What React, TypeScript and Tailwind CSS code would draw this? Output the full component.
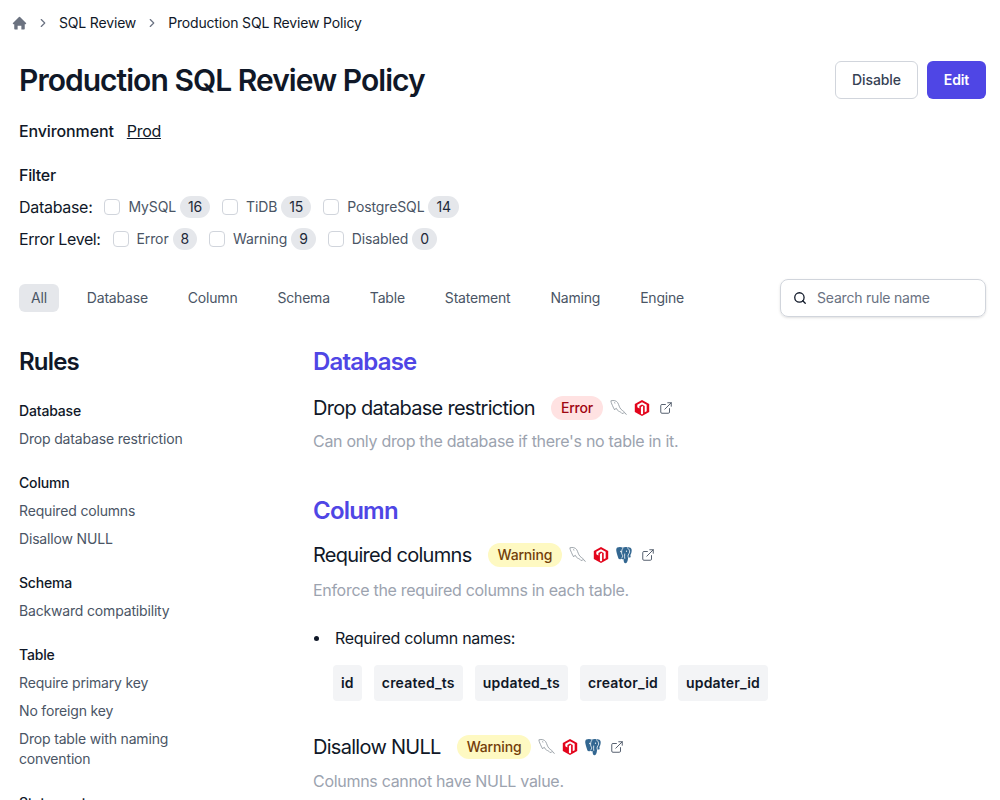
import { ExternalLink, ChevronRight, Search } from "lucide-react";

const HomeIcon = () => (
  <svg viewBox="0 0 20 20" className="w-[15px] h-[15px] shrink-0" fill="#6b7280">
    <path d="M10.700 1.300a1 1 0 0 0-1.400 0l-8 8A1 1 0 0 0 2 11h1v6a1 1 0 0 0 1 1h3.500v-5h5v5H16a1 1 0 0 0 1-1v-6h1a1 1 0 0 0 .700-1.700z" />
  </svg>
);

const MySqlIcon = () => (
  <svg viewBox="0 0 20 20" className="w-[18px] h-[18px] shrink-0" fill="none" stroke="#8a9299" strokeWidth="0.9" strokeLinejoin="round">
    <path d="M1 2c3-.8 6-.2 7.500 2 1.500 2.500 1.800 5.500 3.800 7.500 1.600 1.600 4 2.600 6 6" />
    <path d="M1 2c.2 2.500 1.500 4.500 2.500 7 .4 1 1 2 1.600 3 .4-.8 1-1.400 2-1.600.4 1.300 1.200 2.300 2.400 3 1.400.8 3 1.300 4 2.800.8-.6 1.500-.8 2.500-.6" />
    <path d="M4.500 4l1.400.6" />
  </svg>
);

const TidbIcon = () => (
  <svg viewBox="0 0 20 20" className="w-[18px] h-[18px] shrink-0">
    <path d="M10 1l8 4.500v9L10 19l-8-4.500v-9z" fill="#e3051c" />
    <path d="M4.800 6.500L10 3.500l5.200 3v7L13 14.800V7.800L10 6 7.100 7.700v2.900L4.800 9.300z" fill="#fff" />
    <path d="M8.800 8.800l2.400-1.300v9l-1.200.7-1.200-.7z" fill="#fff" />
  </svg>
);

const PostgresIcon = () => (
  <svg viewBox="0 0 20 20" className="w-[18px] h-[18px] shrink-0">
    <path d="M2.500 1.800c2.200-1 4.600-.7 6.100.1 1.500-.6 3.200-.9 5-.4 2.400-.6 4.300.3 4.800 2 .5 2-.3 4.600-1.200 6.300-.4 1 .7 2 0 2.700-.6.600-1.700.4-2.600.2-.2 2-.5 4-1.300 5.400-.8 1.300-2.600 1.200-3.300 0-.4-1.100-.4-2.400-.5-3.700-1.100.3-1.900.3-2.500-.2-1.100 1-2.400.8-3.200-.2C3.300 11.900 2 8.500 1.500 5.800 1.100 4.100 1.600 2.500 2.500 1.800z" fill="#336791" />
    <path d="M8.800 2.400c-1.300 1.500-1.600 3.600-1.400 5.800.1 1.200 1.300 1.800 1.100 3.200-.1.900-.8 1.600-1.300 2.200M13.600 1.900c1.600 1.100 2.800 2.800 2.700 4.900-.1 1.400-1.400 1.900-1.700 3.300-.2 1.100.1 2.200.2 2.900M10.800 8.400c0 2.200-.4 3.800.1 5.800" fill="none" stroke="#fff" strokeWidth="0.9" />
    <circle cx="6.500" cy="6.100" r="0.800" fill="#fff" />
    <circle cx="12.800" cy="5.800" r="0.700" fill="#fff" />
  </svg>
);

const Count = ({ children }: any) => (
  <span className="ml-1 h-[22px] min-w-[22px] px-[8px] rounded-full bg-gray-200 text-sm tracking-[-0.17px] text-gray-800 flex items-center justify-center">
    {children}
  </span>
);

const FilterItem = ({ label, count }: any) => (
  <div className="flex items-center">
    <span className="w-4 h-4 rounded border border-gray-300 bg-white mr-2"></span>
    <span className="text-sm tracking-[-0.12px] text-gray-600">{label}</span>
    <Count>{count}</Count>
  </div>
);

const RuleHeader = ({ title, level, postgres }: any) => (
  <div className="flex items-center">
    <h3 className="text-xl leading-7 tracking-[-0.71px] text-gray-900">{title}</h3>
    <span
      className={
        level === "Error"
          ? "ml-4 h-6 px-[10px] rounded-full bg-red-100 text-red-800 text-sm tracking-[-0.17px] font-medium flex items-center"
          : "ml-4 h-6 px-[10px] rounded-full bg-yellow-100 text-yellow-900 text-sm tracking-[-0.17px] font-medium flex items-center"
      }
    >
      {level}
    </span>
    <div className="ml-[7px] flex items-center gap-[5px]">
      <MySqlIcon />
      <TidbIcon />
      {postgres && <PostgresIcon />}
      <ExternalLink size={14} strokeWidth={1.6} className="text-gray-600 ml-[3px]" />
    </div>
  </div>
);

const tabs = ["Database", "Column", "Schema", "Table", "Statement", "Naming", "Engine"];

const sidebar = [
  { name: "Database", items: ["Drop database restriction"] },
  { name: "Column", items: ["Required columns", "Disallow NULL"] },
  { name: "Schema", items: ["Backward compatibility"] },
  { name: "Table", items: ["Require primary key", "No foreign key", "Drop table with naming convention"] },
  { name: "Statement", items: [] },
];

const columns = ["id", "created_ts", "updated_ts", "creator_id", "updater_id"];

export default function App() {
  return (
    <div className="h-[800px] overflow-hidden bg-white text-gray-900 tracking-[-0.3px] font-['Inter',sans-serif]">
      {/* BREADCRUMB */}
      <div className="h-[46px] pl-3 flex items-center text-sm tracking-[-0.17px] text-gray-900">
        <HomeIcon />
        <ChevronRight size={14} className="text-gray-500 ml-[9px]" />
        <span className="ml-[9px]">SQL Review</span>
        <ChevronRight size={14} className="text-gray-500 ml-[9px]" />
        <span className="ml-[9px]">Production SQL Review Policy</span>
      </div>

      <div className="pr-[14px] pl-[19px]">
        {/* HEADER */}
        <div className="mt-[15px] flex items-center justify-between h-[38px]">
          <h1 className="text-3xl tracking-[-0.97px] font-semibold">Production SQL Review Policy</h1>
          <div className="flex gap-[9px]">
            <button className="h-[38px] w-[83px] rounded-md border border-gray-300 bg-white text-sm tracking-[-0.1px] font-medium text-gray-700">
              Disable
            </button>
            <button className="h-[38px] w-[59px] rounded-md bg-[#4f46e5] text-sm tracking-[-0.1px] font-semibold text-white">
              Edit
            </button>
          </div>
        </div>

        <div className="mt-[20px] h-6 flex items-center font-medium">
          <span className="tracking-[-0.12px]">Environment</span>
          <span className="ml-[13px] underline font-normal">Prod</span>
        </div>

        {/* FILTER */}
        <div className="mt-[20px] h-6 flex items-center font-medium">Filter</div>
        <div className="mt-[8px] h-6 flex items-center">
          <span className="mr-3">Database:</span>
          <div className="flex gap-3">
            <FilterItem label="MySQL" count={16} />
            <FilterItem label="TiDB" count={15} />
            <FilterItem label="PostgreSQL" count={14} />
          </div>
        </div>
        <div className="mt-2 h-6 flex items-center">
          <span className="mr-3 tracking-[-0.4px]">Error Level:</span>
          <div className="flex gap-3">
            <FilterItem label="Error" count={8} />
            <FilterItem label="Warning" count={9} />
            <FilterItem label="Disabled" count={0} />
          </div>
        </div>

        {/* TABS */}
        <div className="mt-[28px] flex items-center justify-between h-[38px]">
          <div className="flex gap-4 text-sm tracking-[-0.2px] text-gray-600">
            <span className="h-7 px-3 rounded-md bg-gray-200 flex items-center">All</span>
            {tabs.map((t) => (
              <span key={t} className="h-7 px-3 flex items-center whitespace-nowrap">{t}</span>
            ))}
          </div>
          <div className="w-[206px] h-[38px] rounded-lg border border-gray-300 flex items-center pl-3 shadow-sm">
            <Search size={14} strokeWidth={2.2} className="text-gray-900" />
            <span className="ml-[10px] text-sm tracking-[-0.2px] text-gray-500">Search rule name</span>
          </div>
        </div>

        {/* BODY */}
        <div className="mt-[29px] flex">
          <aside className="w-[294px] shrink-0">
            <h2 className="text-2xl leading-8 tracking-[-0.8px] font-semibold">Rules</h2>
            <div className="mt-[23px] flex flex-col gap-[24px]">
              {sidebar.map((group) => (
                <div key={group.name}>
                  <div className="text-sm leading-5 tracking-[-0.17px] font-medium text-gray-900">{group.name}</div>
                  <div className="mt-2 flex flex-col gap-2">
                    {group.items.map((item) => (
                      <div key={item} className="text-sm leading-5 tracking-[-0.17px] text-gray-600 w-[170px]">{item}</div>
                    ))}
                  </div>
                </div>
              ))}
            </div>
          </aside>

          <main className="flex-1">
            <h2 className="text-2xl leading-8 tracking-[-0.8px] font-semibold text-[#4f46e5]">Database</h2>
            <div className="mt-[16px]">
              <RuleHeader title="Drop database restriction" level="Error" />
            </div>
            <p className="mt-[7px] text-[#9ca3af]">Can only drop the database if there's no table in it.</p>

            <h2 className="mt-[42px] text-2xl leading-8 tracking-[-0.8px] font-semibold text-[#4f46e5]">Column</h2>
            <div className="mt-[14px]">
              <RuleHeader title="Required columns" level="Warning" postgres />
            </div>
            <p className="mt-[9px] text-[#9ca3af]">Enforce the required columns in each table.</p>

            <div className="mt-[24px] flex items-center text-gray-900 h-6">
              <span className="w-[5px] h-[5px] rounded-full bg-gray-900 ml-px mr-[16px]"></span>
              Required column names:
            </div>
            <div className="mt-[15px] ml-5 flex gap-3">
              {columns.map((c) => (
                <span key={c} className="h-9 px-2 rounded bg-gray-100 text-sm tracking-[0.2px] font-semibold flex items-center">{c}</span>
              ))}
            </div>

            <div className="mt-[32px]">
              <RuleHeader title="Disallow NULL" level="Warning" postgres />
            </div>
            <p className="mt-[8px] text-[#9ca3af]">Columns cannot have NULL value.</p>
          </main>
        </div>
      </div>
    </div>
  );
}
